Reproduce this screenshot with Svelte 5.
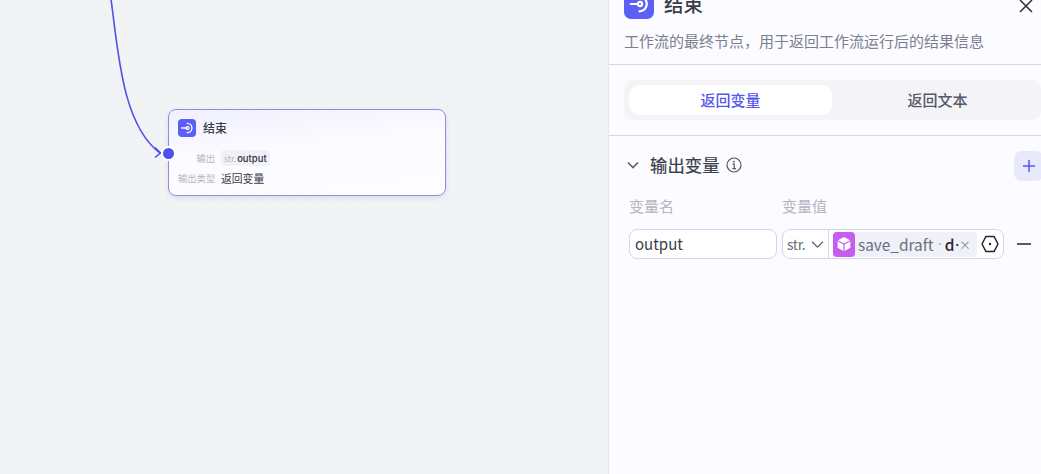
<script>
  let tab = $state('var')
</script>

{#snippet endIcon(size)}
  <svg viewBox="0 0 24 24" width={size} height={size} fill="none" stroke="#fff" stroke-width="2.4" stroke-linecap="round">
    <path d="M3 12h8" />
    <circle cx="13" cy="12" r="2.4" />
    <path d="M12.5 4a8 8 0 1 1 0 16" />
  </svg>
{/snippet}

<main class="page">
  <section class="canvas">
    <svg class="edge" width="180" height="170" viewBox="0 0 180 170" fill="none">
      <path d="M111 -1C118 50 122 125 160 153" stroke="#4f51ee" stroke-width="1.6" />
      <path d="M155 147.5L160.5 153L155 157.5" stroke="#4f51ee" stroke-width="1.6" />
    </svg>

    <div class="node">
      <div class="node-head">
        <span class="end-icon small">{@render endIcon(14)}</span>
        <span class="node-title">结束</span>
      </div>
      <div class="node-row">
        <span class="node-label">输出</span>
        <span class="var-chip"><i>str.</i>output</span>
      </div>
      <div class="node-row second">
        <span class="node-label">输出类型</span>
        <span class="node-value">返回变量</span>
      </div>
      <span class="handle"></span>
    </div>
  </section>

  <aside class="panel">
    <header class="panel-head">
      <div class="title-row">
        <span class="end-icon">{@render endIcon(22)}</span>
        <h1>结束</h1>
        <button class="close" aria-label="关闭">
          <svg viewBox="0 0 16 16" width="16" height="16" fill="none" stroke="#2b2f3a" stroke-width="1.5">
            <path d="M2 2l12 12M14 2L2 14" />
          </svg>
        </button>
      </div>
      <p>工作流的最终节点，用于返回工作流运行后的结果信息</p>
    </header>

    <div class="tabs-wrap">
      <div class="tabs">
        <button class:active={tab === 'var'} onclick={() => (tab = 'var')}>返回变量</button>
        <button class:active={tab === 'text'} onclick={() => (tab = 'text')}>返回文本</button>
      </div>
    </div>

    <section class="outputs">
      <div class="section-head">
        <svg class="chevron" viewBox="0 0 14 14" width="14" height="14" fill="none" stroke="#5a6070" stroke-width="1.6">
          <path d="M2 4.5l5 5 5-5" />
        </svg>
        <h2>输出变量</h2>
        <svg class="info" viewBox="0 0 16 16" width="16" height="16" fill="none" stroke="#4f5666" stroke-width="1.2">
          <circle cx="8" cy="8" r="7" />
          <path d="M6.4 7.2H8.2V11.6M6.4 11.6H10" />
          <circle cx="8" cy="4.7" r=".9" fill="#4f5666" stroke="none" />
        </svg>
        <button class="add" aria-label="添加">
          <svg viewBox="0 0 14 14" width="14" height="14" fill="none" stroke="#5558ee" stroke-width="1.5">
            <path d="M7 1v12M1 7h12" />
          </svg>
        </button>
      </div>

      <div class="labels">
        <span class="name-col">变量名</span>
        <span>变量值</span>
      </div>

      <div class="var-row">
        <div class="name-input">output</div>
        <div class="value-box">
          <div class="type-select">
            <span>str.</span>
            <svg viewBox="0 0 12 12" width="13" height="13" fill="none" stroke="#5a6070" stroke-width="1.1">
              <path d="M1 3.5l5 5 5-5" />
            </svg>
          </div>
          <div class="value-tag">
            <span class="cube">
              <svg viewBox="0 0 16 16" width="16" height="16">
                <path d="M8 1l6 3.3L8 7.6 2 4.3z" fill="#fff" />
                <path d="M1.6 5.2l5.8 3.2V15l-5.8-3.2zM14.4 5.2L8.6 8.4V15l5.8-3.2z" fill="#fff" />
              </svg>
            </span>
            <span class="node-name">save_draft</span>
            <span class="sep">·</span>
            <b>d</b><span class="dot">·</span>
            <span class="tag-x">×</span>
          </div>
          <svg class="hex" viewBox="0 0 18 18" width="18" height="18" fill="none" stroke="#23262f" stroke-width="1.5" stroke-linejoin="round">
            <path d="M5 1.4h8L17 9l-4 7.6H5L1 9z" />
            <circle cx="9" cy="9" r="1.2" fill="#23262f" stroke="none" />
          </svg>
        </div>
        <button class="remove" aria-label="删除">
          <svg viewBox="0 0 14 14" width="14" height="14" fill="none" stroke="#23262f" stroke-width="1.5">
            <path d="M0 7h14" />
          </svg>
        </button>
      </div>
    </section>
  </aside>
</main>

<style>
  :global(body) {
    margin: 0;
    font-family: "Noto Sans CJK SC", "Noto Sans", sans-serif;
  }

  button {
    font: inherit;
    border: none;
    background: none;
    padding: 0;
    cursor: pointer;
  }

  .page {
    display: flex;
    width: 1041px;
    height: 474px;
    overflow: hidden;
  }

  .canvas {
    position: relative;
    width: 608px;
    flex: none;
    background-color: #f2f3f5;
    background-image: radial-gradient(circle, #e9ebee 1px, transparent 1.2px);
    background-size: 15.5px 15.5px;
    background-position: 5px 6px;
  }

  .edge {
    position: absolute;
    left: 0;
    top: 0;
  }

  .node {
    position: absolute;
    left: 168px;
    top: 109px;
    box-sizing: border-box;
    width: 278px;
    height: 87px;
    padding: 8px 9px 0;
    border: 1px solid #8f8aee;
    border-radius: 8px;
    background: linear-gradient(174deg, #f0f0ff 0%, #fcfbff 45%, #fdfcff 100%);
    box-shadow: 0 2px 5px rgba(40, 40, 90, 0.1);
  }

  .node-head {
    display: flex;
    align-items: center;
    gap: 7px;
    height: 20px;
    margin-bottom: 11px;
  }

  .end-icon {
    flex: none;
    display: flex;
    align-items: center;
    justify-content: center;
    width: 30px;
    height: 30px;
    border-radius: 7px;
    background: #5c5ff7;
  }

  .end-icon.small {
    width: 18px;
    height: 18px;
    border-radius: 4px;
  }

  .node-title {
    padding-bottom: 2px;
    font-size: 12px;
    font-weight: 500;
    color: #3a3e4a;
  }

  .node-row {
    display: flex;
    align-items: center;
    gap: 6px;
    height: 18px;
  }

  .node-row.second {
    margin-top: 2px;
  }

  .node-label {
    width: 37px;
    flex: none;
    text-align: right;
    white-space: nowrap;
    font-size: 9.3px;
    color: #b3b6c2;
  }

  .node-value {
    font-size: 10.8px;
    color: #3a3e4a;
  }

  .var-chip {
    display: flex;
    align-items: center;
    height: 16px;
    padding: 0 3px;
    border-radius: 4px;
    background: #f0f0f7;
    color: #2f3340;
    font-family: Inter, sans-serif;
    font-size: 9.5px;
    font-weight: 500;
  }

  .var-chip i {
    margin-right: 1px;
    font-style: normal;
    font-family: "Noto Sans CJK SC", sans-serif;
    font-weight: 400;
    font-size: 8.5px;
    color: #b3b6c2;
  }

  .handle {
    position: absolute;
    left: -8px;
    top: 36px;
    width: 11px;
    height: 11px;
    border: 2px solid #fff;
    border-radius: 50%;
    background: #4f51ee;
  }

  .panel {
    flex: 1;
    min-width: 0;
    overflow: hidden;
    border-left: 1px solid #e6e7ec;
    background: #fcfbff;
    color: #2b2f3a;
  }

  .panel-head {
    height: 76px;
    margin-top: -11px;
    padding: 0 15px;
    border-bottom: 1px solid #d5d6e5;
    box-sizing: border-box;
    width: 432px;
  }

  .title-row {
    display: flex;
    align-items: center;
    gap: 10px;
    height: 30px;
    width: 410px;
  }

  h1 {
    margin: 0;
    font-size: 19.5px;
    font-weight: 500;
    line-height: 30px;
    color: #3a3e4a;
  }

  .close {
    display: flex;
    margin-left: auto;
    margin-top: 3px;
  }

  .panel-head p {
    margin: 10px 0 0;
    font-size: 15px;
    line-height: 24px;
    white-space: nowrap;
    color: #7b8090;
  }

  .tabs-wrap {
    height: 71px;
    padding: 15px 0 0 15px;
    box-sizing: border-box;
    border-bottom: 1px solid #d5d6e5;
  }

  .tabs {
    display: grid;
    grid-template-columns: 203px 1fr;
    height: 40px;
    padding: 5px 0 5px 5px;
    box-sizing: border-box;
    border-radius: 10px;
    background: #f4f4f7;
  }

  .tabs button {
    padding-bottom: 2px;
    border-radius: 10px;
    font-size: 15px;
    font-weight: 500;
    color: #55596a;
  }

  .tabs button:last-child {
    padding-left: 2px;
  }

  .tabs button.active {
    background: #fff;
    color: #5558ee;
  }

  .outputs {
    padding: 15px 0 0 20px;
  }

  .section-head {
    display: flex;
    align-items: center;
    height: 30px;
    width: 415px;
  }

  .chevron {
    margin-left: -3px;
    margin-top: -2px;
  }

  h2 {
    margin: -3px 6px 0 10px;
    font-size: 17.4px;
    font-weight: 400;
    -webkit-text-stroke: 0.2px #3a3e4a;
    color: #3a3e4a;
  }

  .info {
    margin-top: -2px;
  }

  .add {
    flex: none;
    display: flex;
    align-items: center;
    justify-content: center;
    width: 30px;
    height: 30px;
    margin-left: auto;
    border-radius: 8px;
    background: #e9e9fc;
  }

  .labels {
    display: flex;
    margin-top: 13px;
    font-size: 15px;
    line-height: 24px;
    color: #b3b6c2;
  }

  .name-col {
    width: 153px;
  }

  .var-row {
    display: flex;
    align-items: center;
    margin-top: 11px;
    width: 402px;
  }

  .name-input {
    box-sizing: border-box;
    width: 148px;
    height: 30px;
    padding: 0 5px;
    border: 1px solid #d5d6e5;
    border-radius: 8px;
    background: #fff;
    font-size: 15px;
    line-height: 28px;
    color: #3a3e4a;
  }

  .value-box {
    display: flex;
    align-items: center;
    box-sizing: border-box;
    width: 222px;
    height: 30px;
    margin-left: 5px;
    border: 1px solid #d5d6e5;
    border-radius: 8px;
    background: #fff;
  }

  .type-select {
    flex: none;
    display: flex;
    align-items: center;
    justify-content: space-between;
    box-sizing: border-box;
    width: 46px;
    height: 100%;
    padding: 0 4px;
    border-right: 1px solid #d5d6e5;
    font-size: 14px;
    letter-spacing: -0.4px;
    color: #6a6f7e;
  }

  .value-tag {
    flex: none;
    display: flex;
    align-items: center;
    box-sizing: border-box;
    width: 144px;
    height: 25px;
    margin-left: 4px;
    border-radius: 4px;
    background: #f0f0f8;
    font-size: 15.4px;
    color: #6a6f7e;
    white-space: nowrap;
  }

  .cube {
    flex: none;
    display: flex;
    align-items: center;
    justify-content: center;
    width: 22px;
    height: 25px;
    margin-right: 3px;
    border-radius: 4px;
    background: #c65cf0;
  }

  .sep,
  .dot {
    font-family: "Noto Sans", sans-serif;
    font-size: 12px;
  }

  .sep {
    margin: 0 3px 0 5px;
    color: #8a8f9e;
  }

  .value-tag b {
    font-weight: 500;
    color: #23262f;
  }

  .dot {
    margin-left: 1px;
    font-weight: 700;
    color: #23262f;
  }

  .tag-x {
    margin-left: auto;
    margin-right: 6px;
    font-size: 12px;
    color: #8a8f9e;
  }

  .hex {
    flex: none;
    margin-left: 4px;
  }

  .remove {
    display: flex;
    margin-left: 13px;
  }
</style>
